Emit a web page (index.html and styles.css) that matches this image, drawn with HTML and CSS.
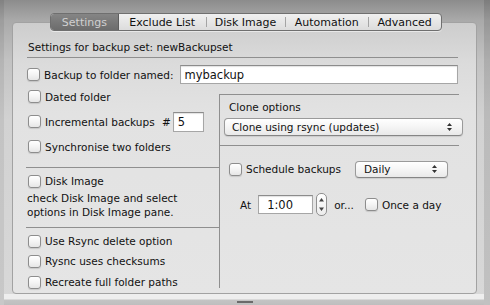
FILE: index.html
```html
<!DOCTYPE html>
<html>
<head>
<meta charset="utf-8">
<link rel="stylesheet" href="styles.css">
</head>
<body>
<div class="window">
  <div class="tabs">
    <div class="tab sel w1">Settings</div>
    <div class="tab w2">Exclude List</div>
    <div class="tab w3 sep">Disk Image</div>
    <div class="tab w4 sep">Automation</div>
    <div class="tab w5 sep">Advanced</div>
  </div>
  <div class="box">
    <div class="header">Settings for backup set: newBackupset</div>
    <div class="row first">
      <span class="cb"></span><span class="lbl">Backup to folder named:</span>
      <div class="field wide">mybackup</div>
    </div>
    <div class="lower">
      <div class="left">
        <div class="group g1">
          <div class="crow"><span class="cb"></span><span class="lbl">Dated folder</span></div>
          <div class="crow"><span class="cb"></span><span class="lbl inc">Incremental backups</span><span class="hash">#</span><div class="field num">5</div></div>
          <div class="crow"><span class="cb"></span><span class="lbl">Synchronise two folders</span></div>
        </div>
        <div class="group g2">
          <div class="crow short"><span class="cb"></span><span class="lbl">Disk Image</span></div>
          <p class="note">check Disk Image and select<br>options in Disk Image pane.</p>
        </div>
        <div class="group g3">
          <div class="crow s20"><span class="cb"></span><span class="lbl">Use Rsync delete option</span></div>
          <div class="crow s20"><span class="cb"></span><span class="lbl">Rysnc uses checksums</span></div>
          <div class="crow s22"><span class="cb"></span><span class="lbl">Recreate full folder paths</span></div>
        </div>
      </div>
      <div class="right">
        <div class="clone">
          <div class="title">Clone options</div>
          <div class="popup big"><span>Clone using rsync (updates)</span><svg class="arr" width="7" height="10" viewBox="0 0 7 10"><path d="M3.5 1 L6 4 L1 4 Z M1 6 L6 6 L3.5 9 Z" fill="#333"/></svg></div>
        </div>
        <div class="sched">
          <span class="cb"></span><span class="lbl">Schedule backups</span>
          <div class="popup small"><span>Daily</span><svg class="arr" width="7" height="10" viewBox="0 0 7 10"><path d="M3.5 1 L6 4 L1 4 Z M1 6 L6 6 L3.5 9 Z" fill="#333"/></svg></div>
        </div>
        <div class="at">
          <span class="atl">At</span>
          <div class="field time">1:00</div>
          <div class="stepper"><svg width="11" height="23" viewBox="0 0 11 23"><path d="M5.5 5 L8 8.5 L3 8.5 Z M3 14.5 L8 14.5 L5.5 18 Z" fill="#444"/></svg></div>
          <span class="or">or...</span>
          <span class="cb"></span><span class="lbl">Once a day</span>
        </div>
      </div>
    </div>
  </div>
  <div class="bottom"><span class="grip"></span></div>
</div>
</body>
</html>
```

FILE: styles.css
```css
html, body {
  margin: 0;
  padding: 0;
}
body {
  width: 490px;
  height: 305px;
  overflow: hidden;
  font-family: "DejaVu Sans", "Lucida Grande", Verdana, sans-serif;
  font-size: 10.5px;
  color: #111;
  background: linear-gradient(#8c8c8c 0px, #a9a9a9 20px, #c2c2c2 60px, #d2d2d2 120px, #d8d8d8 305px);
}
.window {
  position: relative;
  height: 305px;
  padding-top: 13px;
  box-sizing: border-box;
  border-left: 4px solid rgba(0,0,0,0.07);
  border-right: 6px solid rgba(0,0,0,0.1);
}
.tabs {
  display: flex;
  margin-left: 46px;
  width: 392px;
  height: 18px;
  box-sizing: border-box;
  border: 1px solid #6f6f6f;
  border-radius: 4px;
  background: linear-gradient(#f0f0f0, #dcdcdc);
  position: relative;
  z-index: 1;
  overflow: hidden;
  font-size: 11px;
  box-shadow: 0 1px 0 rgba(255,255,255,0.5);
}
.tab {
  display: flex;
  align-items: center;
  justify-content: center;
  height: 16px;
  color: #111;
  position: relative;
}
.tab.sep::before {
  content: "";
  position: absolute;
  left: 0;
  top: 3px;
  height: 10px;
  border-left: 1px solid #a4a4a4;
}
.tab.sel {
  background: linear-gradient(#858585, #6c6c6c);
  color: #d0d0d0;
  border-right: 1px solid #5e5e5e;
}
.w1 { width: 67px; }
.w2 { width: 87px; }
.w3 { width: 80px; }
.w4 { width: 83px; }
.w5 { width: 73px; }
.box {
  margin: -9px 0 0 8px;
  width: 465px;
  height: 272px;
  box-sizing: border-box;
  border: 1px solid #a2a2a2;
  border-radius: 4px;
  background: linear-gradient(#cdcdcd 0px, #dbdbdb 40px, #e2e2e2 90px, #e5e5e5 272px);
  padding: 17px 0 0 14px;
}
.header {
  width: 430px;
  height: 17px;
  line-height: 14px;
  padding-left: 1px;
  border-bottom: 1px solid #8f8f8f;
}
.row {
  display: flex;
  align-items: center;
}
.first {
  margin-top: 7px;
  height: 19px;
  width: 431px;
}
.cb {
  width: 11px;
  height: 11px;
  border: 1px solid #8d8d8d;
  border-radius: 3px;
  background: linear-gradient(#ffffff, #f4f4f4 50%, #e6e6e6);
  box-shadow: 0 1px 1px rgba(0,0,0,0.12);
  flex: none;
}
.lbl {
  margin-left: 4px;
  white-space: nowrap;
}
.field {
  background: #fff;
  border: 1px solid #a6a6a6;
  border-top-color: #8c8c8c;
  box-sizing: border-box;
  box-shadow: inset 0 1px 1px rgba(0,0,0,0.12);
  display: flex;
  align-items: center;
  font-size: 11.5px;
}
.wide {
  flex: 1;
  height: 19px;
  margin-left: 6px;
  padding-left: 4px;
}
.lower {
  display: grid;
  grid-template-columns: 193px 240px;
  align-items: start;
  margin-left: -1px;
}
.group {
  padding-left: 2px;
}
.g1 {
  height: 83px;
  border-bottom: 1px solid #8f8f8f;
}
.crow {
  display: flex;
  align-items: center;
  height: 25px;
}
.inc { width: 117px; }
.hash {
  font-size: 10.5px;
}
.num {
  width: 31px;
  height: 20px;
  margin-left: 2px;
  padding-left: 4px;
}
.g2 {
  height: 53px;
  padding-top: 6px;
  border-bottom: 1px solid #8f8f8f;
}
.crow.short { height: 14px; }
.note {
  margin: 3px 0 0 -1px;
  line-height: 14px;
}
.g3 { padding-top: 3px; }
.crow.s20 { height: 20px; }
.crow.s22 { height: 22px; }
.right {
  margin-top: 10px;
  height: 193px;
  border-left: 1px solid #8f8f8f;
  border-top: 1px solid #8f8f8f;
}
.clone {
  height: 51px;
  border-bottom: 1px solid #8f8f8f;
  padding-top: 5px;
  box-sizing: border-box;
}
.title {
  line-height: 14px;
  margin-left: 9px;
}
.popup {
  display: flex;
  align-items: center;
  justify-content: space-between;
  box-sizing: border-box;
  border: 1px solid #9a9a9a;
  border-bottom-color: #858585;
  border-radius: 4px;
  background: linear-gradient(#ffffff, #f5f5f5 50%, #e9e9e9);
  box-shadow: 0 1px 1px rgba(0,0,0,0.1);
  white-space: nowrap;
}
.big {
  margin: 4px 0 0 4px;
  width: 239px;
  height: 18px;
  padding: 0 9px 0 7px;
}
.sched {
  display: flex;
  align-items: center;
  height: 16px;
  margin-top: 15px;
  padding: 0 11px 0 9px;
}
.small {
  width: 93px;
  height: 17px;
  margin-left: auto;
  padding: 0 9px 0 8px;
}
.arr { flex: none; }
.at {
  display: flex;
  align-items: center;
  height: 19px;
  margin-top: 18px;
  padding-left: 20px;
}
.time {
  width: 55px;
  height: 19px;
  margin-left: 7px;
  padding-left: 8px;
}
.stepper {
  width: 11px;
  height: 23px;
  margin-left: 3px;
  box-sizing: border-box;
  border: 1px solid #909090;
  border-radius: 5px;
  background: linear-gradient(#ffffff, #ececec);
  display: flex;
  align-items: center;
  justify-content: center;
}
.stepper svg { display: block; margin: -1px; }
.or {
  margin-left: 7px;
  margin-right: 11px;
}
.bottom {
  position: relative;
  height: 12px;
  background: linear-gradient(#eeeeee 0, #eeeeee 5px, #c4c4c4 6px, #bdbdbd 12px);
}
.grip {
  position: absolute;
  left: 233px;
  top: 7px;
  width: 16px;
  height: 2px;
  background: #6a6a6a;
}
```
